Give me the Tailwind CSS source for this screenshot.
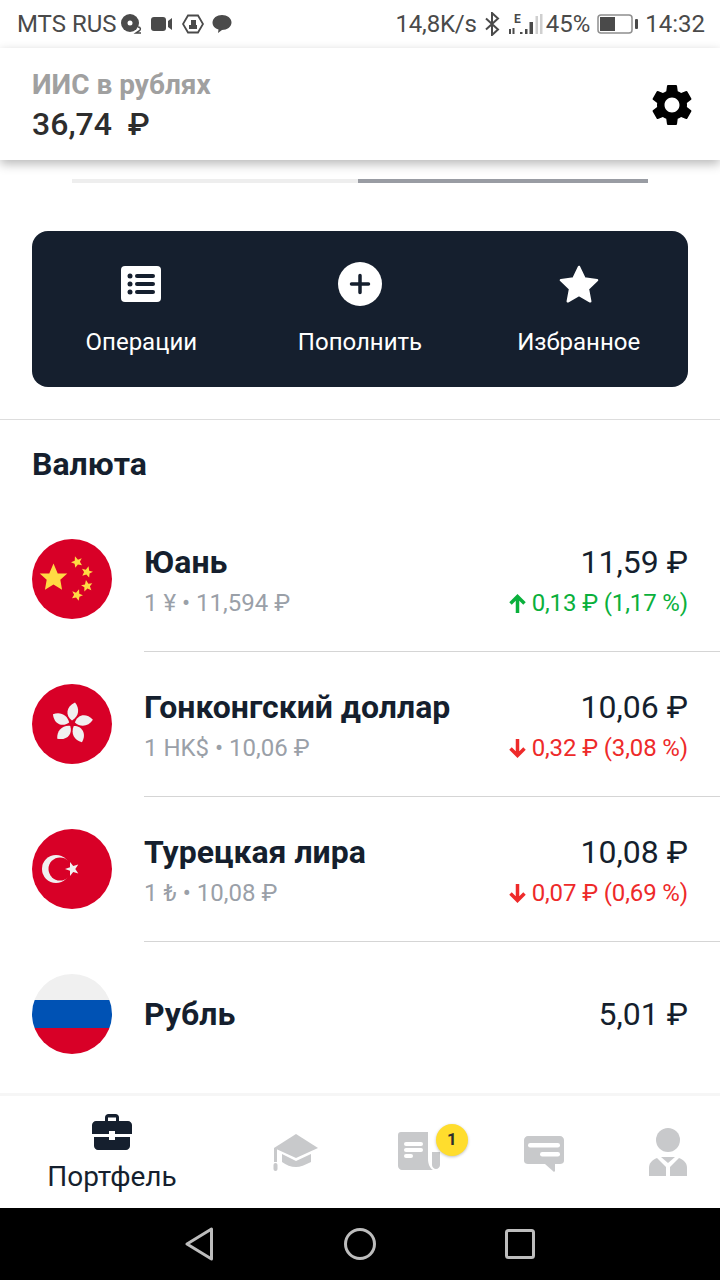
<!DOCTYPE html>
<html lang="ru">
<head>
    <meta charset="UTF-8">
    <meta name="viewport" content="width=device-width, initial-scale=1.0">
    <title>Портфель</title>
    <script src="https://cdn.jsdelivr.net/npm/@tailwindcss/browser@4"></script>
</head>
<body class="bg-white">
<div class="w-[720px] h-[1280px] overflow-hidden flex flex-col font-['Roboto',sans-serif] text-[#151f2e]">

    <!-- status bar -->
    <div class="h-12 shrink-0 flex items-center pl-[17px] pr-[15px] text-[24px] leading-none text-[#4a4a4a] bg-white">
        <span>MTS RUS</span>
        <svg class="ml-[3px]" width="23" height="22" viewBox="0 0 23 22"><circle cx="10" cy="10" r="9" fill="#4a4a4a"/><circle cx="10" cy="10" r="2.5" fill="#fff"/><path d="M18 14c3 0 3 3 1 4l-3 2h5" fill="none" stroke="#4a4a4a" stroke-width="1.5"/></svg>
        <svg class="ml-[8px]" width="22" height="16" viewBox="0 0 22 16"><rect x="0" y="1" width="15" height="14" rx="3" fill="#4a4a4a"/><path d="M17 5l4-3v12l-4-3z" fill="#4a4a4a"/></svg>
        <svg class="ml-[9px]" width="22" height="20" viewBox="0 0 22 20"><path d="M6 1.5h10l5 8.500-5 8.500H6L1 10z" fill="none" stroke="#4a4a4a" stroke-width="1.800"/><path d="M7 11h8v4H7zM9 6h5v5H9z" fill="#4a4a4a"/></svg>
        <svg class="ml-[8px]" width="20" height="20" viewBox="0 0 20 20"><path d="M10 1c5 0 9.500 3 9.500 7.500S15 16 10 16l-4 3 .5-3.500C3 14.500.5 12 .5 8.500.5 4 5 1 10 1z" fill="#4a4a4a"/></svg>
        <span class="ml-auto tracking-[-0.2px]">14,8K/s</span>
        <svg class="ml-[7px]" width="17" height="24" viewBox="0 0 17 24"><path d="M2 6.500l12 11-6 5.500V1l6 5.500-12 11" fill="none" stroke="#4a4a4a" stroke-width="2"/></svg>
        <svg class="ml-[7px]" width="35" height="24" viewBox="0 0 35 24"><text x="6" y="11" font-size="12" font-weight="700" fill="#4a4a4a" font-family="Roboto">E</text><path d="M1 17h2v5H1zM4.500 16h2v6h-2zM12 20h2.500v2H12zM17 17h2.500v5H17zM21.500 10h3.500v12h-3.500z" fill="#4a4a4a"/><path d="M27.500 4h2.500v18h-2.500zM32 2h2.500v20H32z" fill="#cfcfcf"/></svg>
        <span class="ml-[3px]">45%</span>
        <svg class="ml-[7px]" width="41" height="20" viewBox="0 0 41 20"><rect x="1" y="1" width="34" height="18" rx="3" fill="none" stroke="#8f8f8f" stroke-width="1.500"/><rect x="3" y="3" width="15" height="14" fill="#4a4a4a"/><rect x="38" y="5" width="3" height="10" rx="1" fill="#4a4a4a"/></svg>
        <span class="ml-[7px]">14:32</span>
    </div>

    <!-- account header -->
    <div class="h-28 shrink-0 relative z-10 bg-white flex items-center justify-between pl-8 pr-[23px] shadow-[0_4px_10px_rgba(0,0,0,0.28)]">
        <div class="pt-[5px]">
            <div class="text-[28px] leading-[32px] font-bold text-[#a0a0a0]">ИИС в рублях</div>
            <div class="mt-[3px] text-[32px] leading-[40px] font-medium text-[#2d2d2d] whitespace-pre">36,74  ₽</div>
        </div>
        <svg class="mt-[2px]" width="50" height="50" viewBox="0 0 24 24" fill="#000"><path d="M19.14 12.94c.04-.3.06-.61.06-.94 0-.32-.02-.64-.07-.94l2.03-1.58c.18-.14.23-.41.12-.61l-1.92-3.32c-.12-.22-.37-.29-.59-.22l-2.39.96c-.5-.38-1.03-.7-1.62-.94l-.36-2.54c-.04-.24-.24-.41-.48-.41h-3.84c-.24 0-.43.17-.47.41l-.36 2.54c-.59.24-1.13.57-1.62.94l-2.39-.96c-.22-.08-.47 0-.59.22L2.74 8.87c-.12.21-.08.47.12.61l2.03 1.58c-.05.3-.09.63-.09.94s.02.64.07.94l-2.03 1.58c-.18.14-.23.41-.12.61l1.92 3.32c.12.22.37.29.59.22l2.39-.96c.5.38 1.03.7 1.62.94l.36 2.54c.05.24.24.41.48.41h3.84c.24 0 .44-.17.47-.41l.36-2.54c.59-.24 1.13-.56 1.62-.94l2.39.96c.22.08.47 0 .59-.22l1.92-3.32c.12-.22.07-.47-.12-.61l-2.01-1.58zM12 15.6c-1.98 0-3.6-1.62-3.6-3.6s1.62-3.6 3.6-3.6 3.6 1.62 3.6 3.6-1.62 3.6-3.6 3.6z"/></svg>
    </div>

    <!-- carousel indicator -->
    <div class="mt-[19px] mx-[72px] h-1 shrink-0 flex">
        <div class="w-[286px] bg-[#eeeeee]"></div>
        <div class="flex-1 bg-[#999ca3]"></div>
    </div>

    <!-- actions -->
    <div class="mt-12 mx-8 h-[156px] shrink-0 rounded-2xl bg-[#151f2e] grid grid-cols-3 pt-[31px] text-white">
        <div class="flex flex-col items-center">
            <div class="h-11 flex items-center justify-center">
                <svg width="40" height="36" viewBox="0 0 40 36"><rect width="40" height="36" rx="4" fill="#fff"/><g fill="#151f2e"><circle cx="9" cy="10" r="2.500"/><circle cx="9" cy="18" r="2.500"/><circle cx="9" cy="26" r="2.500"/><rect x="14" y="8" width="20" height="4" rx="2"/><rect x="14" y="16" width="20" height="4" rx="2"/><rect x="14" y="24" width="20" height="4" rx="2"/></g></svg>
            </div>
            <div class="mt-5 text-[24px] leading-8">Операции</div>
        </div>
        <div class="flex flex-col items-center">
            <div class="h-11 flex items-center justify-center">
                <svg width="44" height="44" viewBox="0 0 44 44"><circle cx="22" cy="22" r="22" fill="#fff"/><path d="M22 13.500v17M13.500 22h17" stroke="#151f2e" stroke-width="3.500" stroke-linecap="round"/></svg>
            </div>
            <div class="mt-5 text-[24px] leading-8">Пополнить</div>
        </div>
        <div class="flex flex-col items-center">
            <div class="h-11 flex items-center justify-center">
                <svg width="40" height="38" viewBox="0 0 40 38"><path d="M20 2l5.500 11.500 12.500 1.700-9.100 8.700 2.300 12.400L20 30l-11.200 6.300 2.300-12.400L2 15.200l12.500-1.700z" fill="#fff" stroke="#fff" stroke-width="2.500" stroke-linejoin="round"/></svg>
            </div>
            <div class="mt-5 text-[24px] leading-8">Избранное</div>
        </div>
    </div>

    <div class="mt-8 h-px shrink-0 bg-[#dddddd]"></div>

    <!-- list -->
    <div class="flex-1 min-h-0">
        <div class="h-[87px] flex items-center pl-8 text-[32px] font-bold">Валюта</div>

        <div class="h-[145px] flex pl-8">
            <div class="h-[144px] flex items-center shrink-0">
                <svg width="80" height="80" viewBox="0 0 80 80">
                    <defs><path id="star" d="M0-10 2.900-3.100 9.500-3.100 4.700 1.200 5.900 8.100 0 4.400-5.900 8.100-4.700 1.200-9.500-3.100-2.900-3.100z"/></defs>
                    <circle cx="40" cy="40" r="40" fill="#d80027"/>
                    <g fill="#ffda44">
                        <use href="#star" transform="translate(21.500 39) scale(1.450)"/>
                        <use href="#star" transform="translate(45 23) rotate(-20) scale(.6)"/>
                        <use href="#star" transform="translate(55 33) rotate(15) scale(.6)"/>
                        <use href="#star" transform="translate(55 47) rotate(-10) scale(.6)"/>
                        <use href="#star" transform="translate(45 56) rotate(20) scale(.6)"/>
                    </g>
                </svg>
            </div>
            <div class="ml-8 flex-1 border-b border-[#d5d5d5] flex justify-between pr-8 pt-[35px]">
                <div>
                    <div class="text-[32px] leading-[40px] font-bold">Юань</div>
                    <div class="text-[24px] leading-[42px] text-[#9aa0a8]">1 ¥ • 11,594 ₽</div>
                </div>
                <div class="text-right">
                    <div class="text-[32px] leading-[40px]">11,59 ₽</div>
                    <div class="text-[24px] leading-[42px] tracking-[-0.13px] text-[#0ab03c] flex items-center justify-end gap-[6px]">
                        <svg width="17" height="19" viewBox="0 0 17 19"><path d="M8.500 19V3M1.500 9.500 8.500 2.500 15.500 9.500" fill="none" stroke="#0ab03c" stroke-width="3.500"/></svg>
                        <span>0,13 ₽ (1,17 %)</span>
                    </div>
                </div>
            </div>
        </div>

        <div class="h-[145px] flex pl-8">
            <div class="h-[144px] flex items-center shrink-0">
                <svg width="80" height="80" viewBox="0 0 80 80">
                    <circle cx="40" cy="40" r="40" fill="#d80027"/>
                    <g fill="#f0f0f0" transform="translate(40 39.500)">
                        <path d="M0-3C-7-8-6-17 3-21 8-15 7-7 0-3z"/>
                        <path d="M0-3C-7-8-6-17 3-21 8-15 7-7 0-3z" transform="rotate(72)"/>
                        <path d="M0-3C-7-8-6-17 3-21 8-15 7-7 0-3z" transform="rotate(144)"/>
                        <path d="M0-3C-7-8-6-17 3-21 8-15 7-7 0-3z" transform="rotate(216)"/>
                        <path d="M0-3C-7-8-6-17 3-21 8-15 7-7 0-3z" transform="rotate(288)"/>
                    </g>
                </svg>
            </div>
            <div class="ml-8 flex-1 border-b border-[#d5d5d5] flex justify-between pr-8 pt-[35px]">
                <div>
                    <div class="text-[32px] leading-[40px] font-bold">Гонконгский доллар</div>
                    <div class="text-[24px] leading-[42px] text-[#9aa0a8]">1 HK$ • 10,06 ₽</div>
                </div>
                <div class="text-right">
                    <div class="text-[32px] leading-[40px]">10,06 ₽</div>
                    <div class="text-[24px] leading-[42px] tracking-[-0.13px] text-[#ee2a2a] flex items-center justify-end gap-[6px]">
                        <svg width="17" height="19" viewBox="0 0 17 19"><path d="M8.500 0V16M1.500 9.500 8.500 16.500 15.500 9.500" fill="none" stroke="#ee2a2a" stroke-width="3.500"/></svg>
                        <span>0,32 ₽ (3,08 %)</span>
                    </div>
                </div>
            </div>
        </div>

        <div class="h-[145px] flex pl-8">
            <div class="h-[144px] flex items-center shrink-0">
                <svg width="80" height="80" viewBox="0 0 80 80">
                    <circle cx="40" cy="40" r="40" fill="#d80027"/>
                    <circle cx="24" cy="40" r="14" fill="#f0f0f0"/>
                    <circle cx="28" cy="40" r="11.500" fill="#d80027"/>
                    <path d="M0-7 1.800-2 7.100-2 2.900 1.200 4.400 6.300 0 3.300-4.400 6.300-2.900 1.200-7.100-2-1.800-2z" fill="#f0f0f0" transform="translate(40 40) rotate(-90)"/>
                </svg>
            </div>
            <div class="ml-8 flex-1 border-b border-[#d5d5d5] flex justify-between pr-8 pt-[35px]">
                <div>
                    <div class="text-[32px] leading-[40px] font-bold">Турецкая лира</div>
                    <div class="text-[24px] leading-[42px] text-[#9aa0a8]">1 ₺ • 10,08 ₽</div>
                </div>
                <div class="text-right">
                    <div class="text-[32px] leading-[40px]">10,08 ₽</div>
                    <div class="text-[24px] leading-[42px] tracking-[-0.13px] text-[#ee2a2a] flex items-center justify-end gap-[6px]">
                        <svg width="17" height="19" viewBox="0 0 17 19"><path d="M8.500 0V16M1.500 9.500 8.500 16.500 15.500 9.500" fill="none" stroke="#ee2a2a" stroke-width="3.500"/></svg>
                        <span>0,07 ₽ (0,69 %)</span>
                    </div>
                </div>
            </div>
        </div>

        <div class="h-[145px] flex items-start pl-8 pr-8">
            <div class="h-[144px] flex items-center shrink-0">
                <svg width="80" height="80" viewBox="0 0 80 80">
                    <clipPath id="ru"><circle cx="40" cy="40" r="40"/></clipPath>
                    <g clip-path="url(#ru)">
                        <rect width="80" height="26" fill="#f0f0f0"/>
                        <rect y="26" width="80" height="28" fill="#0052b4"/>
                        <rect y="54" width="80" height="26" fill="#d80027"/>
                    </g>
                </svg>
            </div>
            <div class="ml-8 flex-1 h-[144px] flex items-center justify-between">
                <div class="text-[32px] font-bold">Рубль</div>
                <div class="text-[32px]">5,01 ₽</div>
            </div>
        </div>
    </div>

    <!-- tab bar -->
    <div class="h-[115px] shrink-0 bg-white border-t-[3px] border-[#f6f6f6] grid grid-cols-[224px_142px_107px_142px_105px]">
        <div class="flex flex-col items-center pt-[18px]">
            <svg width="40" height="36" viewBox="0 0 40 36" fill="#151f2e"><path d="M13 7V3.500C13 1.500 14.500 0 16.500 0h7C25.500 0 27 1.500 27 3.500V7h-3V3.500h-8V7z"/><path d="M4 7h32c2 0 4 2 4 4v9H23v-3h-6v3H0v-9c0-2 2-4 4-4z"/><path d="M2 23h15v3h6v-3h15v9c0 2-2 4-4 4H6c-2 0-4-2-4-4z"/></svg>
            <div class="mt-[10px] text-[28px] leading-[34px]">Портфель</div>
        </div>
        <div class="flex justify-center pt-[38px]">
            <svg width="45" height="37" viewBox="0 0 45 37" fill="#c8c9cb"><path d="M23 0 45 14 23 24 1 14z"/><path d="M9 20 23 27 38 20V28C32 31 27 33 23 33 18 33 13 31 9 28z"/><rect x="1" y="14" width="3" height="14"/><rect x="0.500" y="29" width="4" height="8" rx="2"/></svg>
        </div>
        <div class="relative flex justify-center pt-[36px]">
            <svg class="-ml-px" width="42" height="38" viewBox="0 0 42 38" fill="#c8c9cb"><path d="M3 0h27v27c0 5 2 9 5 11H4c-2 0-4-2-4-4V3c0-2 1-3 3-3z"/><path d="M34 20h8v13c0 2-2 4-4 4s-4-2-4-4z"/><g fill="#fff"><rect x="6" y="10" width="19" height="4" rx="2"/><rect x="6" y="16" width="19" height="4" rx="2"/><rect x="6" y="22" width="9" height="4" rx="2"/></g></svg>
            <div class="absolute left-[70px] top-[28px] w-8 h-8 rounded-full bg-[#ffdd2d] shadow-[0_1px_3px_rgba(0,0,0,0.25)] flex items-center justify-center text-[17px] font-bold text-[#2d2d2d]">1</div>
        </div>
        <div class="flex justify-center pt-[40px]">
            <svg width="40" height="36" viewBox="0 0 40 36" fill="#c8c9cb"><path d="M4 0h32c2 0 4 2 4 4v21c0 2-2 3-4 3h-5v7l-1 1-9-8H4c-2 0-4-1-4-3V4c0-2 2-4 4-4z"/><g fill="#fff"><rect x="4" y="7" width="32" height="4.500" rx="2.200"/><rect x="16" y="16" width="20" height="4.500" rx="2.200"/></g></svg>
        </div>
        <div class="flex justify-center pt-[32px]">
            <svg width="38" height="48" viewBox="0 0 38 48" fill="#c8c9cb"><circle cx="19" cy="12" r="12"/><path d="M12 29h14l-7 6z"/><path d="M8 30l9 9v9H0v-8c0-5 3-8 8-10z"/><path d="M30 30l-9 9v9h17v-8c0-5-3-8-8-10z"/></svg>
        </div>
    </div>

    <!-- android nav -->
    <div class="h-[72px] shrink-0 bg-black flex items-center pl-[185px]">
        <svg width="28" height="34" viewBox="0 0 28 34"><path d="M26.500 2v30L2 17z" fill="none" stroke="#bdbdbd" stroke-width="3" stroke-linejoin="round"/></svg>
        <svg class="ml-[131px]" width="32" height="32" viewBox="0 0 32 32"><circle cx="16" cy="16" r="14.500" fill="none" stroke="#bdbdbd" stroke-width="3"/></svg>
        <svg class="ml-[129px]" width="30" height="30" viewBox="0 0 30 30"><rect x="1.500" y="1.500" width="27" height="27" rx="2" fill="none" stroke="#bdbdbd" stroke-width="3"/></svg>
    </div>
</div>
</body>
</html>
